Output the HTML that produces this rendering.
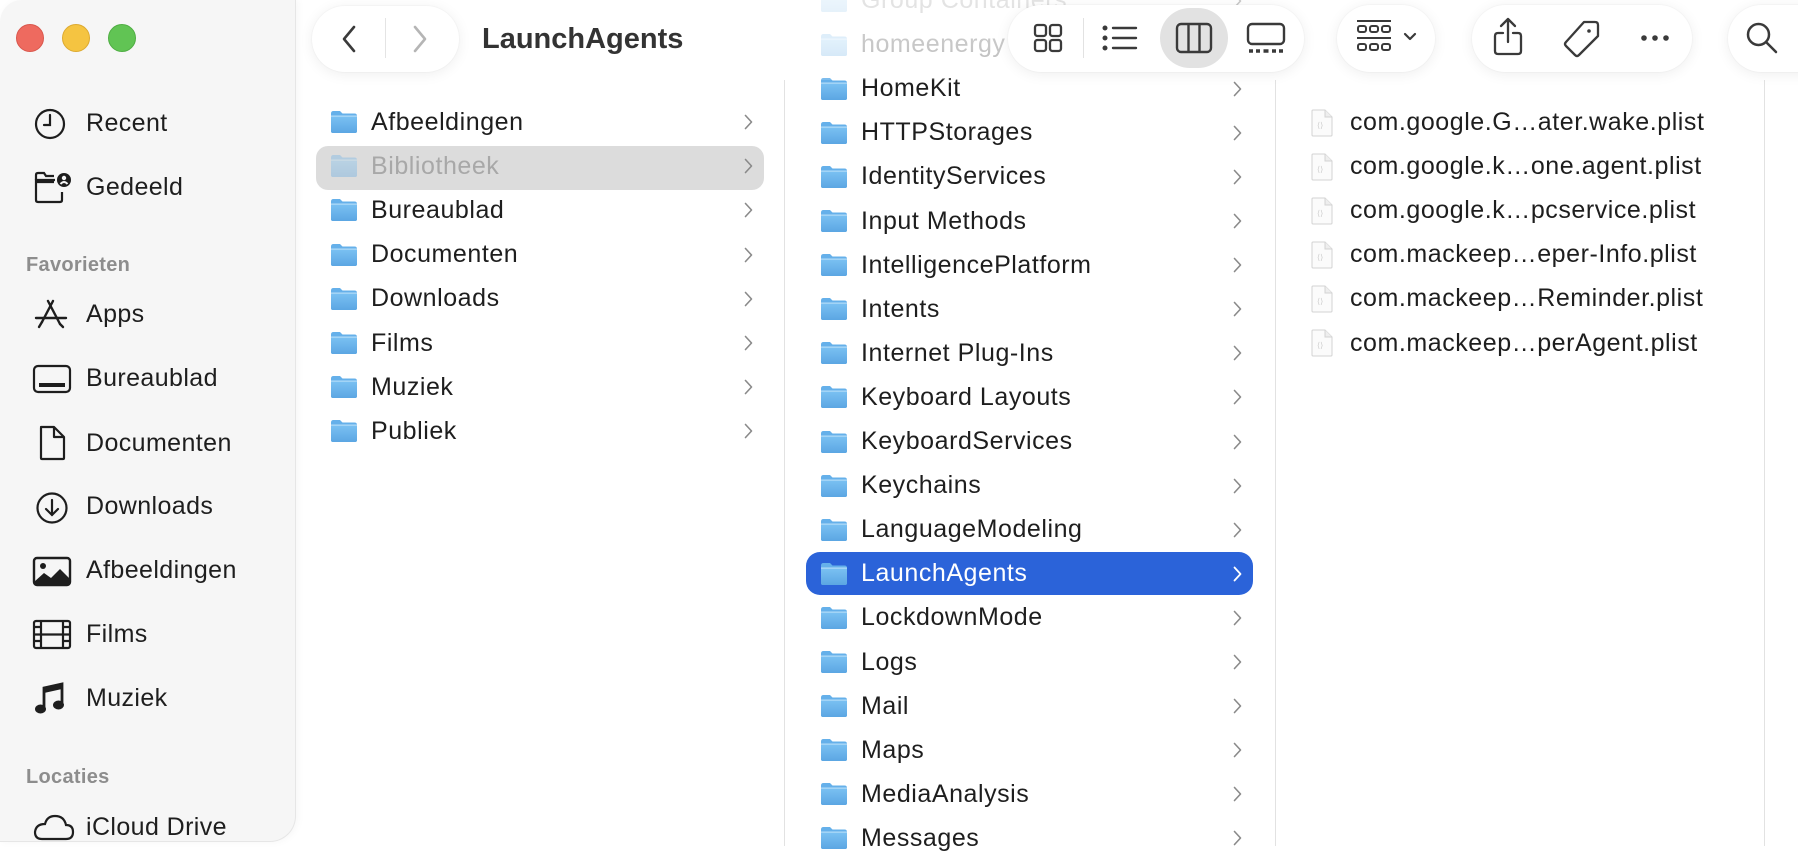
<!DOCTYPE html>
<html><head><meta charset="utf-8">
<style>
*{margin:0;padding:0;box-sizing:border-box}
body{width:1798px;height:846px;overflow:hidden;background:#fff;font-family:"Liberation Sans",sans-serif;color:#222;position:relative}
.abs{position:absolute}
.sidebar{position:absolute;left:0;top:0;width:296px;height:842px;background:#f6f6f6;border-radius:22px 0 26px 0;border-right:1px solid #e6e6e6;border-bottom:1px solid #e6e6e6;box-shadow:2px 0 8px rgba(0,0,0,0.04)}
.tl{position:absolute;top:24px;width:28px;height:28px;border-radius:50%}
.si{position:absolute;left:86px;font-size:25px;letter-spacing:0.4px;line-height:30px;color:#1e1e1e}
.sh{position:absolute;left:26px;font-size:20px;font-weight:bold;color:#8d8d8d;letter-spacing:0.3px}
.ic{position:absolute;left:32px}
.row{position:absolute;height:44px;display:flex;align-items:center;font-size:25px;letter-spacing:0.55px;color:#1e1e1e;white-space:nowrap}
.chev{position:absolute;width:9px;height:16px}
.div{position:absolute;top:80px;width:1px;height:766px;background:#e2e2e2}
.pill{position:absolute;background:#fff;border-radius:34px;box-shadow:0 2px 14px rgba(0,0,0,0.07),0 0 0 1px rgba(0,0,0,0.02)}
</style></head><body>

<div class="div" style="left:784px"></div>
<div class="div" style="left:1275px"></div>
<div class="div" style="left:1764px"></div>

<svg width="0" height="0" style="position:absolute">
<defs>
<linearGradient id="fg" x1="0" y1="0" x2="0" y2="1"><stop offset="0" stop-color="#7cc2f3"/><stop offset="1" stop-color="#5ba6e3"/></linearGradient>
<symbol id="folder" viewBox="0 0 28 24"><path d="M1 3.5Q1 1 3.5 1H10L12.5 3.5H24.5Q27 3.5 27 6V21Q27 23 25 23H3Q1 23 1 21Z" fill="#65b0ea"/><path d="M1 7Q1 5.5 2.5 5.5H25.5Q27 5.5 27 7V21Q27 23 25 23H3Q1 23 1 21Z" fill="url(#fg)"/><rect x="1" y="5.5" width="26" height="1.2" fill="#b4dcf8"/></symbol>
<symbol id="chev" viewBox="0 0 9 16"><path d="M1.5 1.5L7.5 8L1.5 14.5" fill="none" stroke="#8a8a8a" stroke-width="1.6" stroke-linecap="round" stroke-linejoin="round"/></symbol>
<symbol id="plist" viewBox="0 0 22 28"><path d="M2 1H14L21 8V26Q21 27 20 27H2Q1 27 1 26V2Q1 1 2 1Z" fill="#fbfbfb" stroke="#d3d3d3"/><path d="M14 1V8H21" fill="#eee" stroke="#d3d3d3"/><text x="6" y="19" font-size="8" fill="#ccc" font-family="Liberation Sans">⟨⟩</text></symbol>
</defs></svg>

<div class="abs" style="left:316px;top:146px;width:448px;height:44px;border-radius:12px;background:#dcdcdc"></div>
<div id="c1"></div>
<div class="abs" style="left:806px;top:552px;width:447px;height:43px;border-radius:14px;background:#2b63d9"></div>
<div id="c2"></div>
<div id="c3"></div>

<script>
function rows(container, items, ix, tx, cx, y0, sp, opts){
  let h='';
  items.forEach((it,i)=>{
    const cy=y0+i*sp;
    const o=(opts&&opts[i])||{};
    h+=`<svg class="abs" style="left:${ix}px;top:${cy-12}px;opacity:${o.op||1}" width="28" height="24"><use href="#folder"/></svg>`;
    h+=`<div class="row" style="left:${tx}px;top:${cy-22}px;color:${o.col||'#1e1e1e'}">${it}</div>`;
    if(cx && !o.nochev) h+=`<svg class="chev" style="left:${cx}px;top:${cy-8}px"><use href="#chev"/></svg>`;
  });
  document.getElementById(container).innerHTML=h;
}
rows('c1',['Afbeeldingen','Bibliotheek','Bureaublad','Documenten','Downloads','Films','Muziek','Publiek'],330,371,744,122,44.2,{1:{op:0.35,col:'#a8a8a8'}});
const c2=['Group Containers','homeenergy','HomeKit','HTTPStorages','IdentityServices','Input Methods','IntelligencePlatform','Intents','Internet Plug-Ins','Keyboard Layouts','KeyboardServices','Keychains','LanguageModeling','LaunchAgents','LockdownMode','Logs','Mail','Maps','MediaAnalysis','Messages'];
const o2={0:{op:0.3,col:'#c4c4c4'},1:{op:0.35,col:'#a8a8a8'},13:{col:'#fff',nochev:1}};
rows('c2',c2,820,861,1233,0.5,44.1,o2);
let h='';
['com.google.G…ater.wake.plist','com.google.k…one.agent.plist','com.google.k…pcservice.plist','com.mackeep…eper-Info.plist','com.mackeep…Reminder.plist','com.mackeep…perAgent.plist'].forEach((t,i)=>{
  const cy=122.5+i*44.1;
  h+=`<svg class="abs" style="left:1311px;top:${cy-14}px" width="22" height="28"><use href="#plist"/></svg>`;
  h+=`<div class="row" style="left:1350px;top:${cy-22}px">${t}</div>`;
});
document.getElementById('c3').innerHTML=h;
</script>
<svg class="chev" style="left:1233px;top:566px" viewBox="0 0 9 16"><path d="M1.5 1.5L7.5 8L1.5 14.5" fill="none" stroke="#fff" stroke-width="1.8" stroke-linecap="round" stroke-linejoin="round"/></svg>

<div class="abs" style="left:296px;top:0;width:1502px;height:80px;background:linear-gradient(rgba(255,255,255,0.55) 0%,rgba(255,255,255,0.35) 60%,rgba(255,255,255,0.15) 100%)"></div>

<div class="sidebar">
  <div class="tl" style="left:16px;background:#ee6a5f;border:1px solid #d9574d"></div>
  <div class="tl" style="left:62px;background:#f5c441;border:1px solid #ddaa30"></div>
  <div class="tl" style="left:108px;background:#61c454;border:1px solid #4fae43"></div>

  <svg class="ic" style="top:106px" width="36" height="36" viewBox="0 0 36 36" fill="none" stroke="#1e1e1e" stroke-width="2.2"><circle cx="18" cy="18" r="14"/><path d="M18 9V19H12" stroke-linecap="round"/></svg>
  <div class="si" style="top:108px">Recent</div>
  <svg class="ic" style="top:170px" width="40" height="34" viewBox="0 0 40 34" fill="none" stroke="#1e1e1e" stroke-width="2.2"><path d="M23 10H4V30Q4 32 6 32H28Q30 32 30 30V22"/><path d="M4 10V5Q4 3 6 3H12L14 6H22"/><path d="M4 12H22"/><circle cx="32" cy="10" r="7" fill="#1e1e1e" stroke="none"/><circle cx="32" cy="8" r="2.2" fill="#f6f6f6" stroke="none"/><path d="M28.5 14Q32 10 35.5 14" stroke="#f6f6f6" stroke-width="2"/></svg>
  <div class="si" style="top:172px">Gedeeld</div>

  <div class="sh" style="top:254px">Favorieten</div>

  <svg class="ic" style="top:298px" width="38" height="34" viewBox="0 0 38 34" fill="none" stroke="#1e1e1e" stroke-width="2.4" stroke-linecap="round"><path d="M21 3L10 24"/><path d="M16 3L28 26"/><path d="M4 20H34"/><path d="M7 29L10 24"/><path d="M28 26L31 29"/></svg>
  <div class="si" style="top:299px">Apps</div>
  <svg class="ic" style="top:364px" width="40" height="30" viewBox="0 0 40 30" fill="none" stroke="#1e1e1e" stroke-width="2.2"><rect x="2" y="2" width="36" height="26" rx="4"/><rect x="7" y="19" width="26" height="4" fill="#1e1e1e" stroke="none"/></svg>
  <div class="si" style="top:363px">Bureaublad</div>
  <svg class="ic" style="top:425px" width="40" height="36" viewBox="0 0 40 36" fill="none" stroke="#1e1e1e" stroke-width="2.2" stroke-linejoin="round"><path d="M9 2H22L32 12V33Q32 34 31 34H10Q9 34 9 33V3Q9 2 10 2Z"/><path d="M22 2V12H32"/></svg>
  <div class="si" style="top:428px">Documenten</div>
  <svg class="ic" style="top:490px" width="40" height="36" viewBox="0 0 40 36" fill="none" stroke="#1e1e1e" stroke-width="2.2" stroke-linecap="round"><circle cx="20" cy="18" r="14.5"/><path d="M20 10V25M14 19L20 25L26 19"/></svg>
  <div class="si" style="top:491px">Downloads</div>
  <svg class="ic" style="top:556px" width="40" height="32" viewBox="0 0 40 32"><rect x="2" y="2" width="36" height="27" rx="3" fill="none" stroke="#1e1e1e" stroke-width="2.4"/><circle cx="11" cy="10" r="3" fill="#1e1e1e"/><path d="M2 26L12 17L19 22L28 13L38 23V29H2Z" fill="#1e1e1e"/></svg>
  <div class="si" style="top:555px">Afbeeldingen</div>
  <svg class="ic" style="top:619px" width="40" height="32" viewBox="0 0 40 32" fill="none" stroke="#1e1e1e" stroke-width="2.2"><rect x="2" y="2" width="36" height="27" rx="2"/><path d="M9 2V29M31 2V29M9 15.5H31M2 8H9M2 15.5H9M2 22H9M31 8H38M31 15.5H38M31 22H38"/></svg>
  <div class="si" style="top:619px">Films</div>
  <svg class="ic" style="top:681px" width="40" height="36" viewBox="0 0 40 36"><path d="M12 26V7L30 3V22" fill="none" stroke="#1e1e1e" stroke-width="2.8"/><path d="M12 7L30 3V8L12 12Z" fill="#1e1e1e"/><ellipse cx="8.5" cy="28" rx="5.5" ry="4.5" fill="#1e1e1e"/><ellipse cx="26.5" cy="24" rx="5.5" ry="4.5" fill="#1e1e1e"/></svg>
  <div class="si" style="top:683px">Muziek</div>

  <div class="sh" style="top:766px">Locaties</div>
  <svg class="ic" style="top:812px" width="44" height="30" viewBox="0 0 44 30" fill="none" stroke="#1e1e1e" stroke-width="2.2"><path d="M10 27H34Q41 27 41 20Q41 13 34 13Q32 4 23 4Q15 4 13 12Q4 12 3 20Q3 27 10 27Z"/></svg>
  <div class="si" style="top:812px">iCloud Drive</div>
</div>

<div class="pill" style="left:312px;top:6px;width:147px;height:66px"></div>
<svg class="abs" style="left:340px;top:24px" width="18" height="30" viewBox="0 0 18 30"><path d="M14 3L4 15L14 27" fill="none" stroke="#3a3a3a" stroke-width="2.6" stroke-linecap="round" stroke-linejoin="round"/></svg>
<div class="abs" style="left:385px;top:18px;width:1px;height:40px;background:#e4e4e4"></div>
<svg class="abs" style="left:411px;top:24px" width="18" height="30" viewBox="0 0 18 30"><path d="M4 3L14 15L4 27" fill="none" stroke="#b5b5b5" stroke-width="2.6" stroke-linecap="round" stroke-linejoin="round"/></svg>
<div class="abs" style="left:482px;top:23px;font-size:29px;font-weight:bold;color:#333">LaunchAgents</div>

<div class="pill" style="left:1008px;top:5px;width:296px;height:67px"></div>
<div class="abs" style="left:1160px;top:8px;width:68px;height:60px;border-radius:30px;background:#e2e2e2"></div>
<svg class="abs" style="left:1033px;top:23px" width="30" height="30" viewBox="0 0 30 30" fill="none" stroke="#3a3a3a" stroke-width="2.3"><rect x="2" y="2" width="11" height="11" rx="2.5"/><rect x="17" y="2" width="11" height="11" rx="2.5"/><rect x="2" y="17" width="11" height="11" rx="2.5"/><rect x="17" y="17" width="11" height="11" rx="2.5"/></svg>
<div class="abs" style="left:1083px;top:18px;width:1px;height:40px;background:#e2e2e2"></div>
<svg class="abs" style="left:1102px;top:24px" width="36" height="28" viewBox="0 0 36 28" fill="none" stroke="#3a3a3a" stroke-width="2.4" stroke-linecap="round"><circle cx="3" cy="4" r="1.3" fill="#3a3a3a"/><circle cx="3" cy="14" r="1.3" fill="#3a3a3a"/><circle cx="3" cy="24" r="1.3" fill="#3a3a3a"/><path d="M11 4H34M11 14H34M11 24H34"/></svg>
<svg class="abs" style="left:1175px;top:22px" width="38" height="32" viewBox="0 0 38 32" fill="none" stroke="#3a3a3a" stroke-width="2.4"><rect x="2" y="2" width="34" height="28" rx="4"/><path d="M13.5 2V30M24.5 2V30"/></svg>
<svg class="abs" style="left:1246px;top:22px" width="40" height="32" viewBox="0 0 40 32" fill="none" stroke="#3a3a3a" stroke-width="2.4"><rect x="2" y="2" width="36" height="20" rx="4"/><path d="M3 29H7M10 29H14M17.5 29H22.5M26 29H30M33 29H37" stroke-width="3.5"/></svg>

<div class="pill" style="left:1337px;top:5px;width:98px;height:67px"></div>
<svg class="abs" style="left:1356px;top:19px" width="38" height="38" viewBox="0 0 38 38" fill="none" stroke="#3a3a3a" stroke-width="2"><path d="M1 2H35M1 19H35"/><rect x="2" y="7" width="8" height="6" rx="2"/><rect x="14" y="7" width="8" height="6" rx="2"/><rect x="26" y="7" width="8" height="6" rx="2"/><rect x="2" y="25" width="8" height="6" rx="2"/><rect x="14" y="25" width="8" height="6" rx="2"/><rect x="26" y="25" width="8" height="6" rx="2"/></svg>
<svg class="abs" style="left:1403px;top:32px" width="14" height="10" viewBox="0 0 14 10"><path d="M2 2L7 7L12 2" fill="none" stroke="#3a3a3a" stroke-width="2.2" stroke-linecap="round" stroke-linejoin="round"/></svg>

<div class="pill" style="left:1472px;top:5px;width:220px;height:67px"></div>
<svg class="abs" style="left:1492px;top:17px" width="32" height="40" viewBox="0 0 32 40" fill="none" stroke="#3a3a3a" stroke-width="2.3" stroke-linecap="round" stroke-linejoin="round"><path d="M16 2V25M9 9L16 2L23 9"/><path d="M11 16H6Q3 16 3 19V34Q3 37 6 37H26Q29 37 29 34V19Q29 16 26 16H21"/></svg>
<svg class="abs" style="left:1562px;top:19px" width="40" height="40" viewBox="0 0 40 40" fill="none" stroke="#3a3a3a" stroke-width="2.3" stroke-linejoin="round"><path d="M22 3H33Q36 3 36 6V17L17 36Q15 38 13 36L4 27Q2 25 4 23Z"/><circle cx="27" cy="12" r="1.8" fill="#3a3a3a" stroke="none"/></svg>
<svg class="abs" style="left:1640px;top:33px" width="30" height="10" viewBox="0 0 30 10"><circle cx="4" cy="5" r="2.8" fill="#3a3a3a"/><circle cx="15" cy="5" r="2.8" fill="#3a3a3a"/><circle cx="26" cy="5" r="2.8" fill="#3a3a3a"/></svg>

<div class="pill" style="left:1728px;top:5px;width:110px;height:67px"></div>
<svg class="abs" style="left:1745px;top:21px" width="34" height="34" viewBox="0 0 34 34" fill="none" stroke="#3a3a3a" stroke-width="2.5" stroke-linecap="round"><circle cx="13.5" cy="13.5" r="10.5"/><path d="M21 21L31 31"/></svg>

</body></html>
